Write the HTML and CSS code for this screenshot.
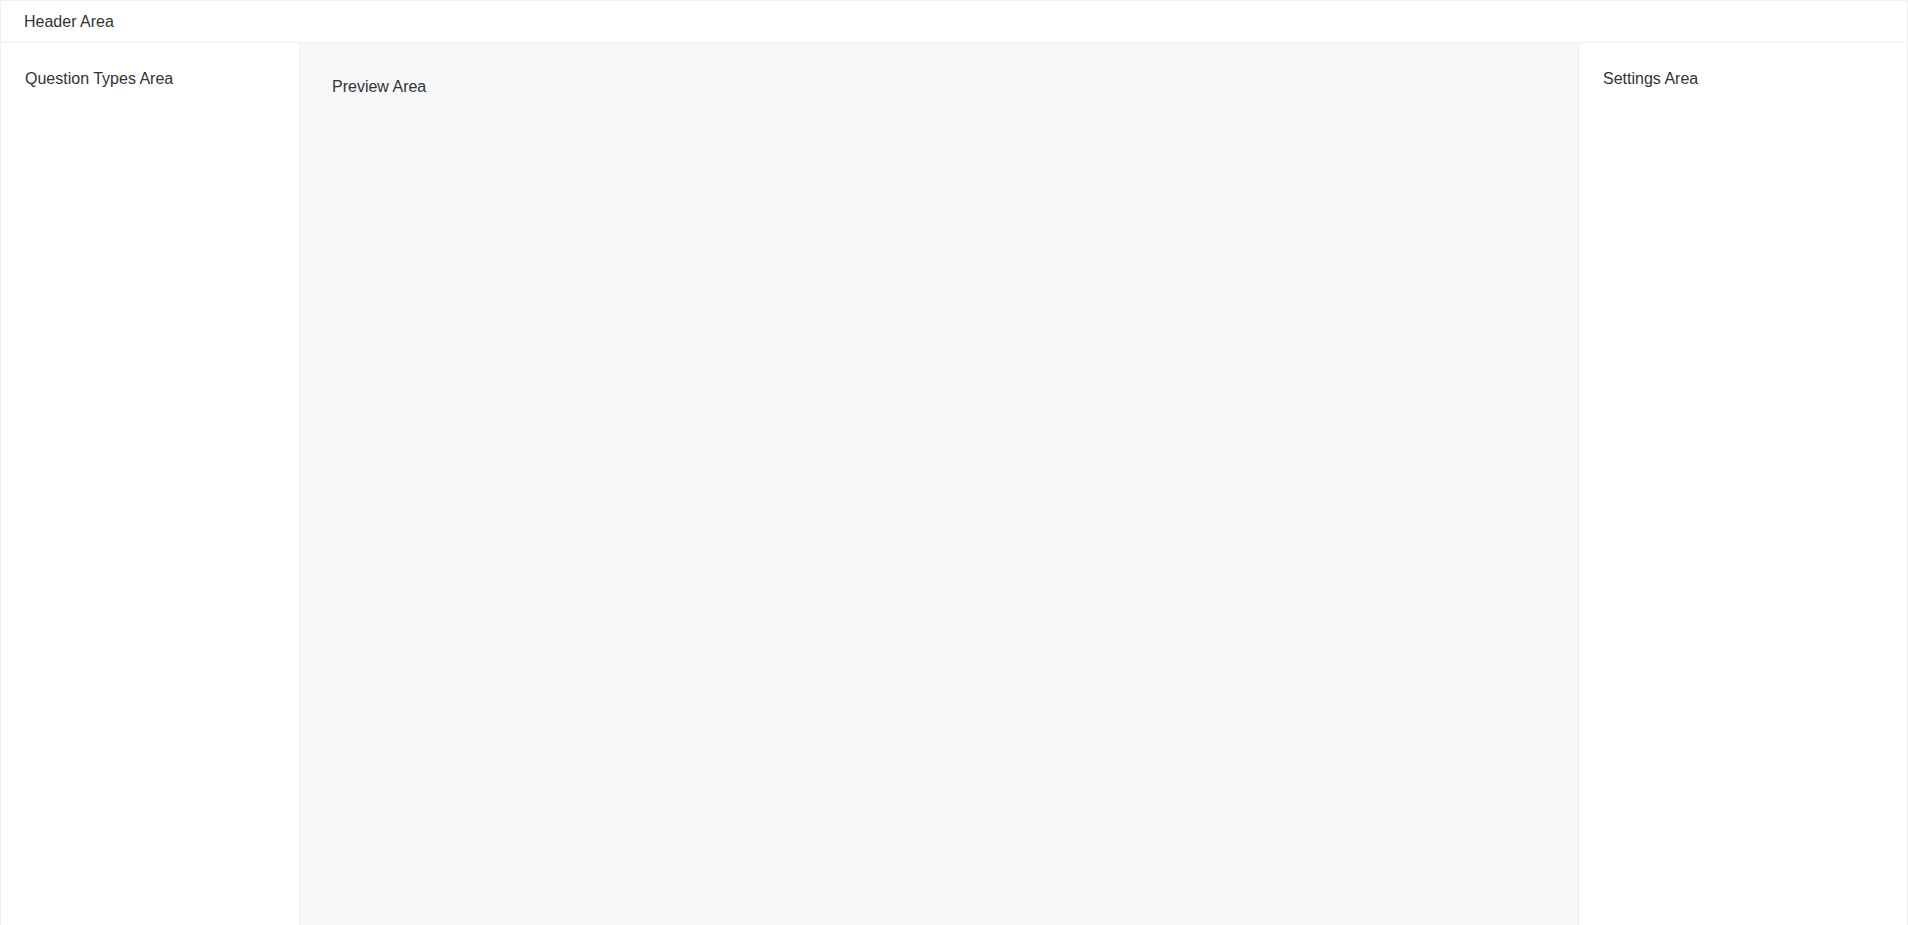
FILE: index.html
```html
<!DOCTYPE html>

<html lang="en">
  <head>
    <meta charset="UTF-8" />

    <title>Editor</title>

    <link rel="stylesheet" href="styles.css">
  </head>

  <body>
    <div class="app">
      <div class="header">Header Area</div>

      <div class="main">
        <div class="types">Question Types Area</div>

        <div class="preview">Preview Area</div>

        <div class="settings">Settings Area</div>
      </div>
    </div>
  </body>
</html>
```

FILE: styles.css
```css
* {
  box-sizing: border-box;
}

body {
  margin: 0;

  font-family: "Liberation Sans", Arial, sans-serif;

  font-size: 16px;

  color: #333;
}

.app {
  height: 100vh;

  display: flex;

  flex-direction: column;

  border: 1px solid #eef0f3;

  border-bottom: none;
}

.header {
  height: 42px;

  flex-shrink: 0;

  display: flex;

  align-items: center;

  padding: 0 23px;

  border-bottom: 1px solid #eef0f3;

  background-color: #fff;
}

.main {
  flex: 1;

  display: flex;

  min-height: 0;
}

.types {
  width: 299px;

  flex-shrink: 0;

  padding: 27px 24px;

  border-right: 1px solid #eef0f3;

  background-color: #fff;
}

.preview {
  flex: 1;

  padding: 35px 32px;

  background-color: #f7f8fa;
}

.settings {
  width: 329px;

  flex-shrink: 0;

  padding: 27px 24px;

  border-left: 1px solid #eef0f3;

  background-color: #fff;
}
```
